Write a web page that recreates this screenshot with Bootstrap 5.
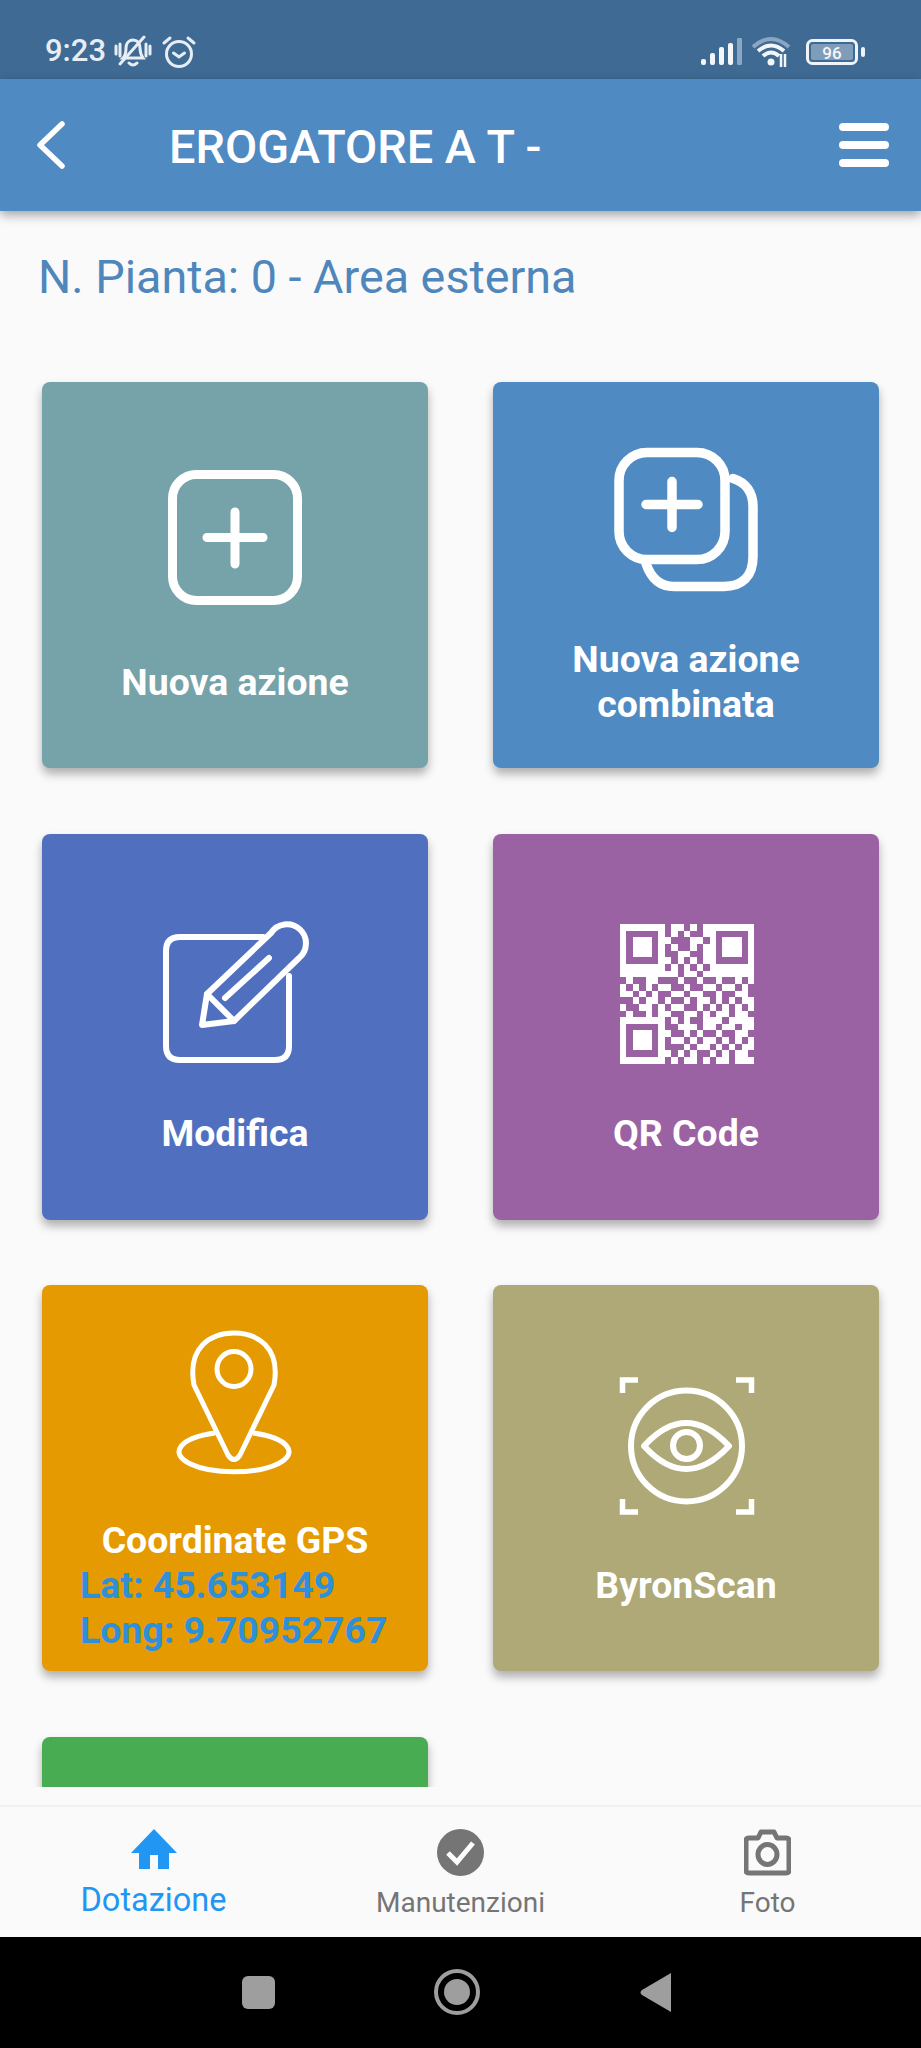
<!DOCTYPE html>
<html lang="it">
<head>
  <meta charset="UTF-8" />
  <title>Erogatore</title>
  <meta name="viewport" content="width=device-width, initial-scale=1.0"/>
  <link href="https://cdn.jsdelivr.net/npm/bootstrap@5.3.0/dist/css/bootstrap.min.css" rel="stylesheet" />
  <style>
    html, body { height: 2048px; overflow: hidden; }
    body { background: #fafafa; font-family: Roboto, "Liberation Sans", sans-serif; }
    .screen { height: 2048px; }
    .status-strip { height: 79px; background: #3e6a94; color: #e6edf4; font-size: 31px; font-weight: 500; padding: 24px 55px 0 45px; flex: none; }
    .status-strip svg { display: block; flex: none; }
    .status-alarm { margin-left: 9px; }
    .status-wifi { margin-left: 9px; }
    .status-battery { margin-left: 13px; }
    .app-bar { height: 132px; background: #4f8ac2; color: #fff; box-shadow: 0 4px 10px rgba(0,0,0,.35); padding: 0 32px 0 36px; flex: none; z-index: 2; flex-wrap: nowrap; }
    .app-title { font-size: 46.8px; font-weight: 500; line-height: 52px; margin-left: 103px; padding-top: 4px; }
    .page-body { padding: 41px 42px 0; overflow: hidden; margin-bottom: 18px; min-height: 0; }
    .plant-title { font-size: 46.7px; line-height: 50px; color: #4f86bb; margin: 0 0 80px -4px; font-weight: 400; }
    .tile-grid { display: grid; grid-template-columns: 386px 386px; column-gap: 65px; row-gap: 65.5px; }
    .tile { height: 386px; border: 0; border-radius: 8px; color: #fff; box-shadow: 0 6px 10px rgba(0,0,0,.3); padding-top: 25px; }
    .tile svg { display: block; overflow: visible; margin: 0 auto 45px; }
    .tile-label { font-size: 37.4px; font-weight: 700; line-height: 45px; }
    .tile-coords { font-size: 37.4px; font-weight: 700; line-height: 45px; color: #2e90da; text-align: left; padding-left: 38px; white-space: nowrap; }
    .tile-teal { background: #76a2a9; }
    .tile-blue { background: #4f8ac2; }
    .tile-indigo { background: #5070bf; }
    .tile-purple { background: #9a62a3; }
    .tile-orange { background: #e59a02; }
    .tile-olive { background: #aea977; }
    .tile-green { background: #48ac53; }
    .bottom-tabs { height: 132px; background: #fafafa; border-top: 2px solid #f1f1f1; flex: none; }
    .tab-item { color: #757575; font-size: 28px; line-height: 32px; padding-top: 22px; text-decoration: none; }
    .tab-item svg { display: block; margin-bottom: 11px; }
    .tab-item.is-active { color: #2196f3; font-size: 32.5px; line-height: 36px; }
    .tab-item.is-active svg { margin-bottom: 13px; }
    .system-bar { height: 111px; background: #000; flex: none; }
  </style>
</head>
<body>
  <div class="screen d-flex flex-column">
    <div class="status-strip d-flex align-items-center justify-content-between">
      <div class="d-flex align-items-center">
        <span>9:23</span>
        <svg class="ms-2" width="38" height="34" viewBox="0 0 38 34" fill="none" stroke="#e6edf4" stroke-width="3" stroke-linecap="round">
          <path d="M9 23 C12 20 12 16 12 13 C12 7 16 5 19 5 C23 5 26 8 26 13 C26 17 27 20 29 23 Z"/>
          <path d="M15 28 Q19 32 23 28"/>
          <path d="M6 29 L30 2"/>
          <path d="M2 11v8M6 9v12M32 9v12M36 11v8"/>
        </svg>
        <svg class="status-alarm" width="36" height="34" viewBox="0 0 36 34" fill="none" stroke="#e6edf4" stroke-width="3" stroke-linecap="round">
          <circle cx="18" cy="19" r="12.5"/>
          <path d="M12.500 18 L18 22 L23.500 18"/>
          <path d="M3 8 L9 3M33 8 L27 3"/>
        </svg>
      </div>
      <div class="d-flex align-items-center">
        <svg width="41" height="28" viewBox="0 0 41 28" fill="#f4f7fa">
          <rect x="0" y="21" width="5" height="6" rx="2"/>
          <rect x="9" y="15" width="5" height="12" rx="2"/>
          <rect x="18" y="9" width="5" height="18" rx="2"/>
          <rect x="27" y="5" width="5" height="22" rx="2"/>
          <rect x="36" y="0" width="5" height="27" rx="1" fill="#8ba6c0"/>
        </svg>
        <svg class="status-wifi" width="42" height="32" viewBox="0 0 42 32" fill="none" stroke-width="4">
          <path d="M2 11 Q20 -5 38 11" stroke="#8ba6c0"/>
          <path d="M7 15 Q20 4 33 15M12 20 Q20 13 28 20" stroke="#f4f7fa"/>
          <circle cx="20" cy="26" r="3.500" fill="#f4f7fa" stroke="none"/>
          <path d="M30 31 V18M34 31 V18" stroke="#f4f7fa" stroke-width="2.500"/>
        </svg>
        <svg class="status-battery" width="60" height="26" viewBox="0 0 60 26">
          <rect x="1.500" y="1.500" width="49" height="23" rx="5" fill="none" stroke="#f0f4f8" stroke-width="3"/>
          <rect x="5" y="5" width="42" height="16" rx="2" fill="#7f9cb9"/>
          <rect x="55" y="8" width="4" height="10" rx="2" fill="#f0f4f8"/>
          <text x="26" y="19.500" text-anchor="middle" font-family="Roboto, sans-serif" font-size="17" font-weight="500" fill="#f4f7fa">96</text>
        </svg>
      </div>
    </div>

    <nav class="navbar app-bar justify-content-start">
      <svg width="30" height="48" viewBox="0 0 30 48" fill="none" stroke="#fff" stroke-width="5.500" stroke-linecap="round" stroke-linejoin="round">
        <path d="M26 3 L4 24 L26 45"/>
      </svg>
      <span class="app-title flex-grow-1">EROGATORE A T -</span>
      <svg width="50" height="44" viewBox="0 0 50 44" fill="#fff">
        <rect x="0" y="0" width="50" height="8" rx="4"/>
        <rect x="0" y="18" width="50" height="8" rx="4"/>
        <rect x="0" y="36" width="50" height="8" rx="4"/>
      </svg>
    </nav>

    <main class="page-body flex-grow-1">
      <h1 class="plant-title">N. Pianta: 0 - Area esterna</h1>
      <div class="tile-grid">
        <div class="card tile tile-teal text-center justify-content-center">
          <svg width="160" height="144" viewBox="155 470 160 144" fill="none" stroke="#fff" stroke-width="9" stroke-linecap="round">
            <rect x="172.500" y="473.500" width="125" height="126" rx="24"/>
            <path d="M235 511 V563M207 536.500 H263"/>
          </svg>
          <div class="tile-label">Nuova azione</div>
        </div>
        <div class="card tile tile-blue text-center justify-content-center">
          <svg width="160" height="144" viewBox="606 447.500 160 144" fill="none" stroke="#fff" stroke-width="9.500" stroke-linecap="round">
            <path d="M733 478 C746 482 753 492 753 506 V556 C753 576 742 586 724 586 H674 C660 586 651 578 646 563"/>
            <rect x="619" y="452" width="106" height="107" rx="28"/>
            <path d="M672 481 V527M646 504 H698"/>
          </svg>
          <div class="tile-label">Nuova azione<br>combinata</div>
        </div>
        <div class="card tile tile-indigo text-center justify-content-center">
          <svg width="160" height="144" viewBox="155 921 160 144" fill="none" stroke="#fff" stroke-width="6" stroke-linejoin="round" stroke-linecap="round">
            <path d="M263 936 H180 Q166 936 166 950 V1045 Q166 1059 180 1059 H275 Q289 1059 289 1045 V975"/>
            <path d="M202 1024 L207 993 L271 932 A19 19 0 1 1 299 957 L234 1020 Z"/>
            <path d="M207 993 L234 1020M225 997 L269 957"/>
          </svg>
          <div class="tile-label">Modifica</div>
        </div>
        <div class="card tile tile-purple text-center justify-content-center">
          <svg id="qrIcon" width="160" height="144" viewBox="606 921 160 144" fill="#fff" shape-rendering="crispEdges"></svg>
          <div class="tile-label">QR Code</div>
        </div>
        <div class="card tile tile-orange text-center justify-content-center">
          <svg width="160" height="144" viewBox="154 1327 160 144" fill="none" stroke="#fff" stroke-width="5" stroke-linejoin="round">
            <path d="M193 1383 C186 1345 210 1331 233 1331 C256 1331 280 1345 273 1383 L239 1453 Q233 1462 227 1453 Z"/>
            <ellipse cx="233" cy="1367" rx="17" ry="17.500"/>
            <path d="M214 1431 A55 20 0 1 0 252 1431"/>
          </svg>
          <div class="tile-label">Coordinate GPS</div>
          <div class="tile-coords">Lat: 45.653149<br>Long: 9.70952767</div>
        </div>
        <div class="card tile tile-olive text-center justify-content-center">
          <svg width="160" height="144" viewBox="606 1372 160 144" fill="none" stroke="#fff" stroke-width="6">
            <circle cx="686.500" cy="1444" r="55.500"/>
            <path d="M644 1444 Q686 1398 729 1444 Q686 1490 644 1444 Z" stroke-linejoin="round"/>
            <circle cx="686.500" cy="1443.500" r="13.500"/>
            <path d="M638 1378 H622.500 V1391M736 1378 H751.500 V1391M638 1510 H622.500 V1497M736 1510 H751.500 V1497" stroke-width="5.500"/>
          </svg>
          <div class="tile-label">ByronScan</div>
        </div>
        <div class="card tile tile-green"></div>
      </div>
    </main>

    <nav class="bottom-tabs d-flex">
      <a class="tab-item is-active flex-fill w-100 d-flex flex-column align-items-center" href="#">
        <svg width="46" height="40" viewBox="0 0 46 40" fill="#2196f3"><path d="M23 0 L46 24 H38 V40 H27 V26 H19 V40 H8 V24 H0 Z"/></svg>
        <span>Dotazione</span>
      </a>
      <a class="tab-item flex-fill w-100 d-flex flex-column align-items-center" href="#">
        <svg width="47" height="47" viewBox="0 0 47 47">
          <circle cx="23.500" cy="23.500" r="23.500" fill="#757575"/>
          <path d="M11 24 L20 33 L36 14" fill="none" stroke="#fff" stroke-width="5"/>
        </svg>
        <span>Manutenzioni</span>
      </a>
      <a class="tab-item flex-fill w-100 d-flex flex-column align-items-center" href="#">
        <svg width="47" height="47" viewBox="0 0 47 47" fill="none" stroke="#757575" stroke-width="5" stroke-linejoin="round">
          <path d="M5 9 H14 L17 3 H30 L33 9 H42 Q45 9 45 12 V41 Q45 44 42 44 H5 Q2 44 2 41 V12 Q2 9 5 9 Z"/>
          <ellipse cx="23.500" cy="25.500" rx="9.500" ry="10"/>
        </svg>
        <span>Foto</span>
      </a>
    </nav>

    <div class="system-bar d-flex align-items-center justify-content-center">
      <svg width="921" height="111" viewBox="0 1937 921 111">
        <rect x="242" y="1976" width="33" height="33" rx="6" fill="#9e9e9e"/>
        <circle cx="457" cy="1992" r="21" fill="none" stroke="#9e9e9e" stroke-width="4"/>
        <circle cx="457" cy="1992" r="13" fill="#9e9e9e"/>
        <path d="M671 1973 V2012 L642 1995 Q639 1992.500 642 1990 Z" fill="#9e9e9e"/>
      </svg>
    </div>
  </div>

  <script src="https://cdn.jsdelivr.net/npm/bootstrap@5.3.0/dist/js/bootstrap.bundle.min.js"></script>
  <script>
    // qr modules, read off the reference
    const qrRows = [
      '111111101101011111111',
      '100000101010011000001',
      '101110110001101011101',
      '101110101001011011101',
      '101110100110011011101',
      '100000110101011000001',
      '111111101010101111111',
      '111111111011011111111',
      '010011000100100100101',
      '101010110010011011010',
      '110101001101100100110',
      '001011010010110101011',
      '100110101100101010101',
      '010010110011010110110',
      '111111101010011101111',
      '100000100111011011011',
      '101110110010100100110',
      '101110101101011010101',
      '101110100010110101011',
      '100000110101001010110',
      '111111101011010110111'
    ];
    const qrIcon = document.getElementById('qrIcon');
    const cell = 6.4;
    let qrPath = '';
    qrRows.forEach((row, y) => {
      [...row].forEach((bit, x) => {
        if (bit === '1') qrPath += 'M' + (620 + x * cell) + ' ' + (923 + y * cell * 1.04) + 'h' + cell + 'v' + (cell * 1.04) + 'h-' + cell + 'z';
      });
    });
    qrIcon.innerHTML = '<path d="' + qrPath + '"/>';
  </script>
</body>
</html>
